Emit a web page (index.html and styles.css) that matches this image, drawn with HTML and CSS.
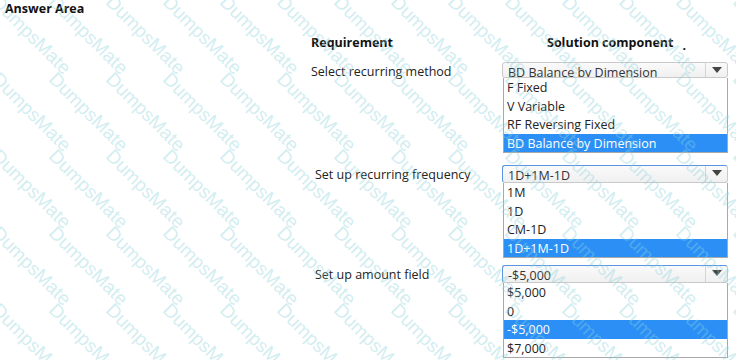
FILE: index.html
```html
<!DOCTYPE html>
<html lang="en">
<head>
    <meta charset="UTF-8">
    <title>Answer Area</title>
    <link rel="stylesheet" href="styles.css">
</head>
<body>
    <div class="page">
        <h1 class="title">Answer Area</h1>

        <div class="answer">
            <div class="head">Requirement</div>
            <div class="head head-solution">Solution component<span class="dot">.</span></div>

            <div class="req">Select recurring method</div>
            <div class="dropdown">
                <div class="box">
                    <span class="value">BD Balance by Dimension</span>
                    <span class="arrow"></span>
                </div>
                <ul class="list">
                    <li>F Fixed</li>
                    <li>V Variable</li>
                    <li>RF Reversing Fixed</li>
                    <li class="selected">BD Balance by Dimension</li>
                </ul>
            </div>

            <div class="req req-indent">Set up recurring frequency</div>
            <div class="dropdown">
                <div class="box focused">
                    <span class="value">1D+1M-1D</span>
                    <span class="arrow"></span>
                </div>
                <ul class="list">
                    <li>1M</li>
                    <li>1D</li>
                    <li>CM-1D</li>
                    <li class="selected">1D+1M-1D</li>
                </ul>
            </div>

            <div class="req req-indent">Set up amount field</div>
            <div class="dropdown">
                <div class="box focused">
                    <span class="value">-$5,000</span>
                    <span class="arrow"></span>
                </div>
                <ul class="list">
                    <li>$5,000</li>
                    <li>0</li>
                    <li class="selected">-$5,000</li>
                    <li>$7,000</li>
                </ul>
            </div>
        </div>

        <div class="watermark" id="watermark"></div>
    </div>

    <script>
        // fill the watermark grid
        var wm = document.getElementById('watermark');
        for (var i = 0; i < 14 * 6; i++) {
            var cell = document.createElement('span');
            cell.className = 'wm';
            cell.textContent = 'DumpsMate';
            wm.appendChild(cell);
        }
    </script>
</body>
</html>
```

FILE: styles.css
```css
body {
    margin: 0;
    background: #fff;
    font-family: 'Open Sans', 'Noto Sans', sans-serif;
    color: #222;
}
.page {
    position: relative;
    width: 736px;
    height: 360px;
    overflow: hidden;
}
.title {
    margin: 0;
    padding: 1px 0 0 5px;
    font-size: 12.5px;
    font-weight: bold;
    line-height: 16px;
    color: #111;
}
.answer {
    display: grid;
    grid-template-columns: 192px 225px;
    grid-template-rows: 30px 103px 100px;
    padding: 15px 0 0 311px;
}
.head {
    font-size: 12.5px;
    font-weight: bold;
    line-height: 18px;
    color: #111;
    padding-top: 2px;
}
.head-solution {
    padding-left: 44px;
}
.dot {
    margin-left: 9px;
    position: relative;
    top: 3px;
}
.req {
    font-size: 12.5px;
    line-height: 18px;
    padding-top: 1px;
}
.req-indent {
    padding-left: 4px;
    padding-top: 1px;
}
.dropdown {
    font-size: 12.5px;
}
.box {
    display: flex;
    height: 16px;
    border: 1px solid #c9c9c9;
    border-radius: 3px;
    background: linear-gradient(#fafafa, #f0f0f0);
    overflow: hidden;
    box-sizing: border-box;
    margin-left: -1px;
}
.box.focused {
    border-color: #5b95e0 #c9c9c9 #c9c9c9 #5b95e0;
    height: 18px;
}
.value {
    flex: 1;
    padding-left: 5px;
    line-height: 19px;
    color: #333;
    white-space: nowrap;
}
.arrow {
    width: 21px;
    border-left: 1px solid #d4d4d4;
    position: relative;
}
.arrow::after {
    content: '';
    position: absolute;
    left: 6px;
    top: 4px;
    border-left: 5px solid transparent;
    border-right: 5px solid transparent;
    border-top: 6px solid #444;
}
.list {
    list-style: none;
    margin: 0;
    padding: 0;
    border: 1px solid #a8a8a8;
    border-top: none;
    background: #fff;
}
.list li {
    height: 18.5px;
    line-height: 19.5px;
    padding-left: 3px;
    white-space: nowrap;
}
.list li.selected {
    background: #2b8ff6;
    color: #fff;
}
.watermark {
    position: absolute;
    left: 2px;
    top: -8px;
    display: grid;
    grid-template-columns: repeat(14, 57px);
    grid-auto-rows: 77px;
    pointer-events: none;
}
.wm {
    display: block;
    font-family: 'Liberation Sans', sans-serif;
    font-size: 19px;
    line-height: 19px;
    color: rgba(140, 210, 220, 0.4);
    white-space: nowrap;
    transform: rotate(45deg);
    transform-origin: 0 0;
    width: 0;
}
```
